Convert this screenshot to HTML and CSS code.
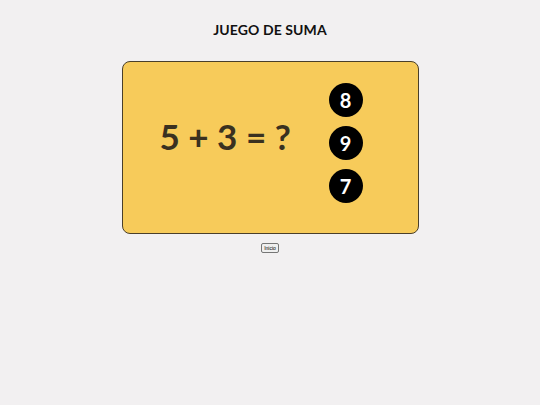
FILE: index.html
```html
<!DOCTYPE html>
<html lang="es">
<head>
  <meta charset="UTF-8" />
  <title>Juego de suma</title>
  <link rel="stylesheet" href="styles.css">
</head>
<body>
  <div class="page">
    <h1 class="title">JUEGO DE SUMA</h1>

    <div class="card">
      <div class="question">5 + 3 = ?</div>
      <div class="options">
        <div class="option">8</div>
        <div class="option">9</div>
        <div class="option">7</div>
      </div>
    </div>

    <button class="start-btn">Inicio</button>
  </div>
</body>
</html>
```

FILE: styles.css
```css
:root {
  --bg: #f2f0f1;
  --card: #f7cb5a;
  --ink: #3a3120;
}

* {
  box-sizing: border-box;
  margin: 0;
  padding: 0;
}

body {
  background: var(--bg);
  font-family: Lato, "Noto Sans", sans-serif;
  color: #111;
}

.page {
  display: flex;
  flex-direction: column;
  align-items: center;
  padding-top: 21px;
}

.title {
  font-size: 14px;
  font-weight: 700;
  letter-spacing: 0.1px;
  line-height: 17px;
}

.card {
  margin-top: 23px;
  width: 297px;
  height: 173px;
  background: var(--card);
  border: 1px solid #4a3f2a;
  border-radius: 8px;
  display: flex;
  align-items: center;
  padding: 0 0 10px 37px;
}

.question {
  font-size: 35px;
  font-weight: 700;
  color: var(--ink);
  width: 150px;
  margin-bottom: 14px;
}

.options {
  display: flex;
  flex-direction: column;
  gap: 9px;
  margin-left: 19px;
}

.option {
  width: 34px;
  height: 34px;
  border-radius: 50%;
  background: #000;
  color: #fff;
  font-size: 20px;
  font-weight: 700;
  display: flex;
  align-items: center;
  justify-content: center;
}

.start-btn {
  margin-top: 9px;
  font-family: "Liberation Sans", sans-serif;
  font-size: 5px;
  padding: 1px 2px;
  background: #efefef;
  border: 1px solid #767676;
  border-radius: 2px;
}
```
